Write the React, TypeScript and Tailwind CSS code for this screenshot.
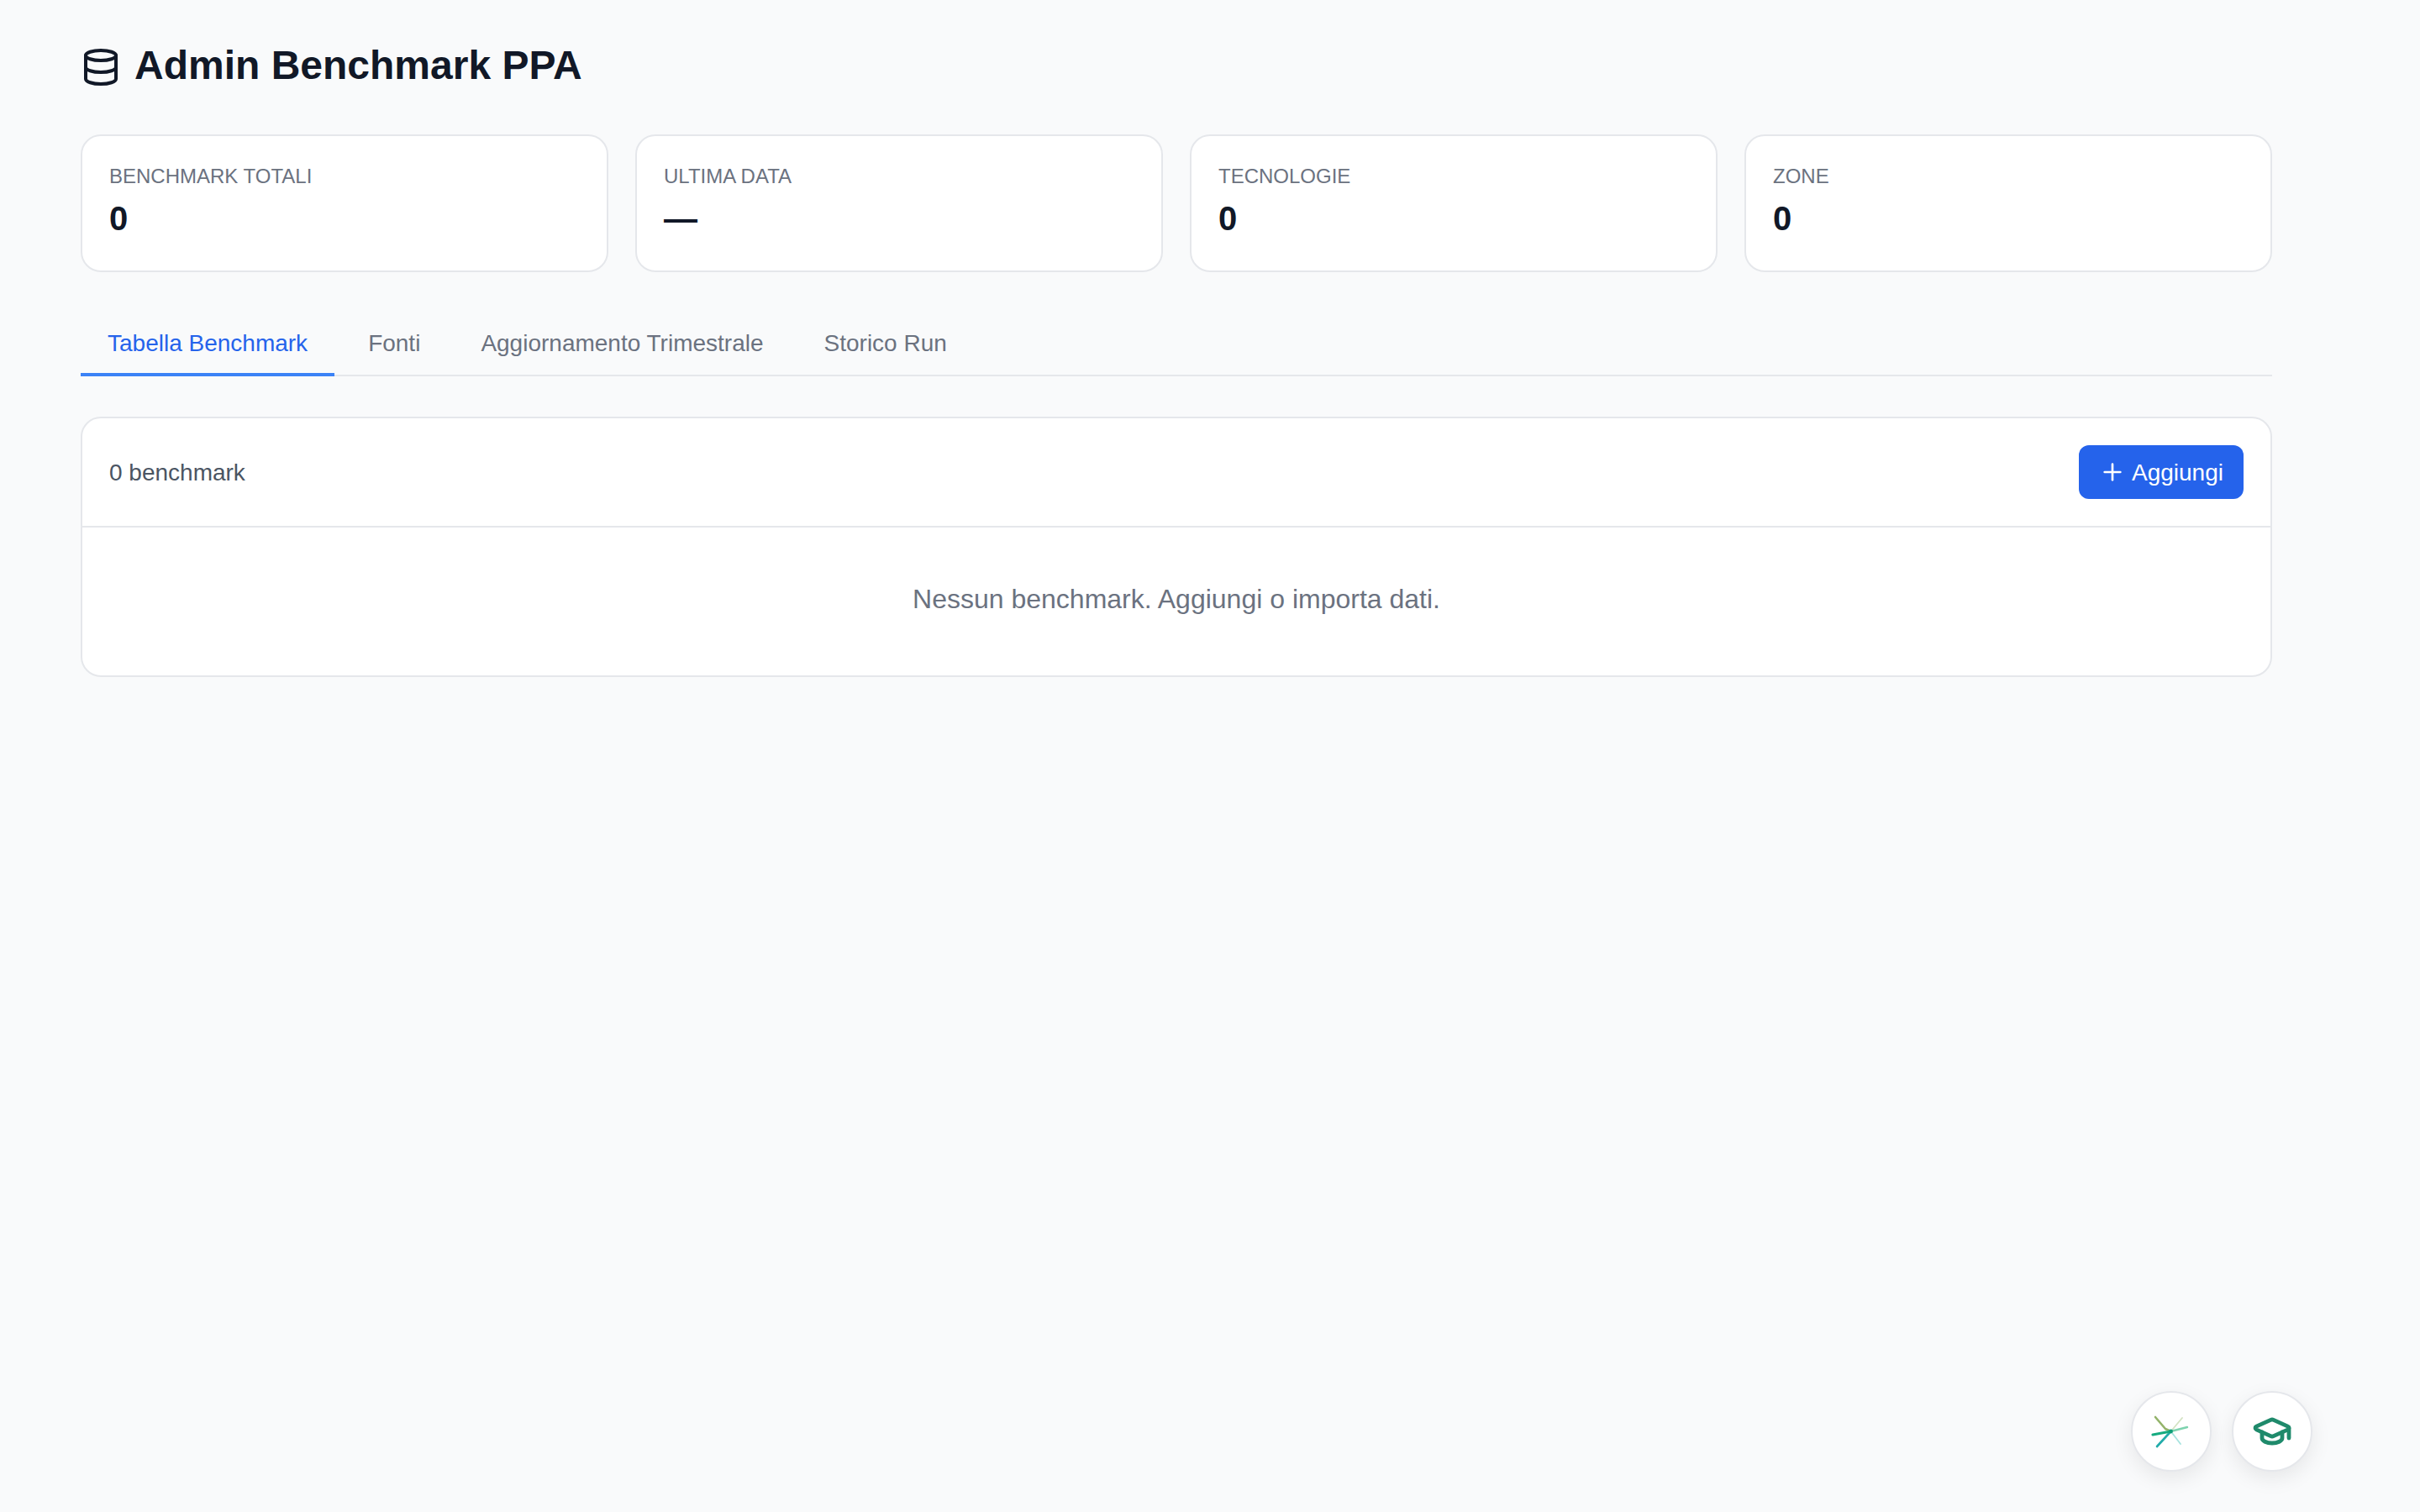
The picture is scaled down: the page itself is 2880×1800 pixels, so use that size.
import { Database, GraduationCap, Plus } from "lucide-react";

const stats = [
  { label: "BENCHMARK TOTALI", value: "0" },
  { label: "ULTIMA DATA", value: "—" },
  { label: "TECNOLOGIE", value: "0" },
  { label: "ZONE", value: "0" },
];

const tabs = ["Tabella Benchmark", "Fonti", "Aggiornamento Trimestrale", "Storico Run"];

function Spark() {
  return (
    <svg width="48" height="48" viewBox="0 0 48 48" fill="none" strokeLinecap="round" strokeLinejoin="round">
      <path d="M23.5 24 L17 21 L5 7" stroke="#93b36a" strokeWidth="2.6" />
      <path d="M23.5 24 L37 8" stroke="#d3e3c3" strokeWidth="1.8" />
      <path d="M23.5 24 L43 19" stroke="#7ed3af" strokeWidth="2.4" />
      <path d="M23.5 24 L35 39" stroke="#a6e3df" strokeWidth="1.8" />
      <path d="M23.5 24 L7 42" stroke="#22acaa" strokeWidth="2.6" />
      <path d="M23.5 24 L2 28" stroke="#16ab80" strokeWidth="3.2" />
      <circle cx="23.5" cy="24" r="2.4" fill="#0e9f78" />
    </svg>
  );
}

export default function App() {
  return (
    <div className="min-h-screen bg-[#f9fafb] pt-[48px] pl-[96px] font-['Liberation_Sans',Arial,sans-serif]">
      <div className="w-[2608px]">
        <div className="flex items-center gap-[16px] h-[64px] mb-[48px]">
          <Database className="w-[48px] h-[48px] text-[#111827]" strokeWidth={2} />
          <h1 className="text-[48px] leading-[56px] font-bold text-[#111827] -mt-[4px]">Admin Benchmark PPA</h1>
        </div>

        <div className="grid grid-cols-4 gap-[32px] mb-[48px]">
          {stats.map((s) => (
            <div key={s.label} className="h-[164px] bg-white border-2 border-[#e5e7eb] rounded-[24px] p-[32px]">
              <div className="text-[24px] leading-[32px] text-[#6b7280] mb-[4px]">{s.label}</div>
              <div className="text-[40px] leading-[60px] font-bold text-[#111827]">{s.value}</div>
            </div>
          ))}
        </div>

        <div className="flex gap-[8px] border-b-2 border-[#e5e7eb] mb-[48px]">
          {tabs.map((t, i) => (
            <div
              key={t}
              className={
                i === 0
                  ? "px-[32px] pt-[17px] pb-[15px] text-[28px] leading-[40px] -mb-[2px] border-b-4 border-[#3b82f6] text-[#2563eb]"
                  : "px-[32px] pt-[17px] pb-[15px] text-[28px] leading-[40px] -mb-[2px] border-b-4 border-transparent text-[#6b7280]"
              }
            >
              {t}
            </div>
          ))}
        </div>

        <div className="bg-white border-2 border-[#e5e7eb] rounded-[24px]">
          <div className="flex items-center justify-between p-[32px] border-b-2 border-[#e5e7eb]">
            <span className="text-[28px] leading-[40px] text-[#4b5563] translate-y-px">0 benchmark</span>
            <button className="flex items-center gap-[7px] h-[64px] w-[196px] pl-[24px] bg-[#2563eb] rounded-[12px] text-white text-[28px]">
              <Plus className="w-[32px] h-[32px]" strokeWidth={2} />
              <span className="translate-y-px">Aggiungi</span>
            </button>
          </div>
          <div className="pt-[61px] pb-[67px] text-center text-[32px] leading-[48px] text-[#6b7280]">
            Nessun benchmark. Aggiungi o importa dati.
          </div>
        </div>
      </div>

      <div className="fixed right-[128px] bottom-[48px] flex gap-[24px]">
        <button className="w-[96px] h-[96px] rounded-full bg-white border-2 border-[#e5e7eb] flex items-center justify-center shadow-[0_8px_24px_rgba(0,0,0,0.08)]">
          <Spark />
        </button>
        <button className="w-[96px] h-[96px] rounded-full bg-white border-2 border-[#e5e7eb] flex items-center justify-center shadow-[0_8px_24px_rgba(0,0,0,0.08)]">
          <GraduationCap className="w-[48px] h-[48px] text-[#1f8a6b]" strokeWidth={2.4} />
        </button>
      </div>
    </div>
  );
}
